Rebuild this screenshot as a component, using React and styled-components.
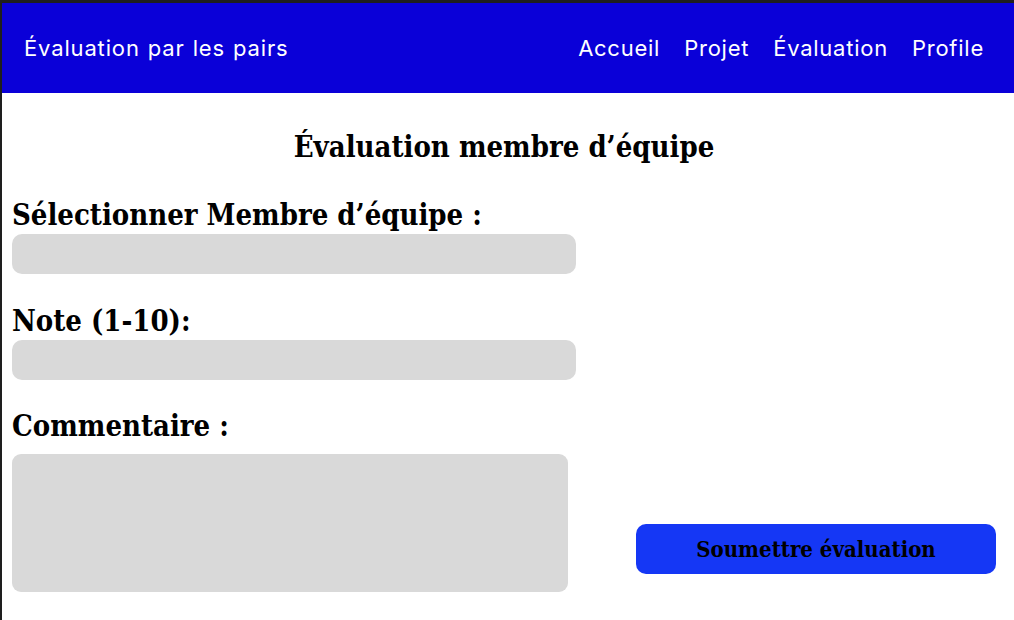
import React from "react";
import styled, { createGlobalStyle } from "styled-components";

const GlobalStyle = createGlobalStyle`
  html, body {
    margin: 0;
    padding: 0;
    background: #1e1e1e;
  }
  #root {
    min-height: 100vh;
  }
`;

const serif = `"DejaVu Serif Condensed", "DejaVu Serif", serif`;

const Frame = styled.div`
  margin: 3px 0 0 2px;
  min-height: calc(100vh - 3px);
  background: #ffffff;
  display: flex;
  flex-direction: column;
`;

const Header = styled.header`
  height: 90px;
  background: #0a00d8;
  display: flex;
  align-items: center;
  justify-content: space-between;
  padding: 0 30px 0 22px;
  font-family: Inter, "Open Sans", sans-serif;
  color: #ffffff;
`;

const Brand = styled.div`
  font-size: 22px;
  letter-spacing: 0.85px;
  word-spacing: 1px;
`;

const Nav = styled.nav`
  display: flex;
  gap: 24px;
`;

const NavLink = styled.a`
  font-size: 22px;
  letter-spacing: 0.75px;
  color: #ffffff;
  text-decoration: none;
  cursor: pointer;
`;

const Main = styled.main`
  padding: 39px 18px 0 10px;
  font-family: ${serif};
  font-stretch: condensed;
  color: #000;
`;

const Title = styled.h1`
  margin: 0 0 38px;
  text-align: center;
  font-size: 29px;
  line-height: 30px;
  font-weight: 700;
`;

const Layout = styled.div`
  display: grid;
  grid-template-columns: 564px 1fr;
  column-gap: 60px;
  align-items: end;
`;

const Fields = styled.div`
  display: flex;
  flex-direction: column;
`;

const Label = styled.label`
  font-size: 29px;
  font-weight: 700;
  line-height: 30px;
  margin-bottom: 4px;
`;

const Input = styled.input`
  height: 40px;
  width: 100%;
  box-sizing: border-box;
  border: none;
  border-radius: 10px;
  background: #d9d9d9;
  margin-bottom: ${(p) => p.$gap || 0}px;
`;

const TextArea = styled.textarea`
  height: 138px;
  width: ${(p) => p.$width}px;
  box-sizing: border-box;
  border: none;
  border-radius: 9px;
  background: #d9d9d9;
  resize: none;
  margin-top: 9px;
`;

const SubmitButton = styled.button`
  width: 360px;
  height: 50px;
  margin-bottom: 18px;
  border: none;
  border-radius: 10px;
  background: #1537f5;
  color: #000;
  font-family: ${serif};
  font-stretch: condensed;
  font-size: 22px;
  font-weight: 700;
  cursor: pointer;
`;

export default function App() {
  return (
    <>
      <GlobalStyle />
      <Frame>
        <Header>
          <Brand>Évaluation par les pairs</Brand>
          <Nav>
            <NavLink>Accueil</NavLink>
            <NavLink>Projet</NavLink>
            <NavLink>Évaluation</NavLink>
            <NavLink>Profile</NavLink>
          </Nav>
        </Header>
        <Main>
          <Title>Évaluation membre d’équipe</Title>
          <Layout>
            <Fields>
              <Label>Sélectionner Membre d’équipe :</Label>
              <Input $gap={32} />
              <Label>Note (1-10):</Label>
              <Input $gap={31} />
              <Label>Commentaire :</Label>
              <TextArea $width={556} />
            </Fields>
            <SubmitButton>Soumettre évaluation</SubmitButton>
          </Layout>
        </Main>
      </Frame>
    </>
  );
}
